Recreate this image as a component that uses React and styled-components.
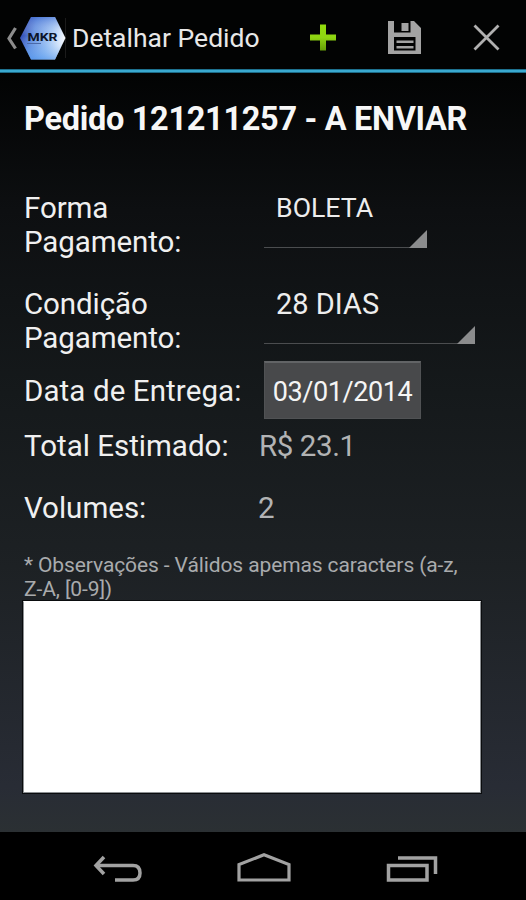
import React, { useState } from "react";
import styled, { createGlobalStyle } from "styled-components";

const GlobalStyle = createGlobalStyle`
  * {
    box-sizing: border-box;
  }

  body {
    margin: 0;
    background: #000000;
    font-family: Roboto, "Noto Sans", sans-serif;
  }
`;

const Screen = styled.div`
  display: flex;
  flex-direction: column;
  width: 526px;
  height: 900px;
  overflow: hidden;
`;

const ActionBar = styled.header`
  display: flex;
  align-items: center;
  flex: none;
  height: 69px;
  padding: 6px 22px 0 6px;
  background: #020303;
`;

const HomeButton = styled.button`
  display: flex;
  align-items: center;
  flex: none;
  width: 66px;
  height: 48px;
  padding: 0;
  border: 0;
  background: none;
`;

const Title = styled.h1`
  flex: 1;
  margin: 0;
  font-size: 26.5px;
  font-weight: 400;
  line-height: 34px;
  white-space: nowrap;
  color: #e8e8e8;
`;

const Actions = styled.div`
  display: flex;
  gap: 48px;
`;

const ActionButton = styled.button`
  display: flex;
  align-items: center;
  justify-content: center;
  width: 34px;
  height: 40px;
  padding: 0;
  border: 0;
  background: none;
`;

const AccentLine = styled.div`
  flex: none;
  height: 4px;
  background: linear-gradient(#1d708e 0 1px, #3aa9d0 1px 3px, #1d6b87 3px);
`;

const Content = styled.main`
  display: flex;
  flex-direction: column;
  flex: none;
  height: 759px;
  padding: 26px 44px 0 23px;
  background: linear-gradient(
    #020303 0%,
    #0d0f11 18%,
    #15191b 42%,
    #1d2124 65%,
    #282c35 94%,
    #2b3033 100%
  );
`;

const Heading = styled.h2`
  flex: none;
  height: 92px;
  margin: 0;
  padding-left: 1px;
  font-size: 32.5px;
  font-weight: 700;
  line-height: 40px;
  letter-spacing: -0.31px;
  white-space: nowrap;
  color: #f7f7f7;
`;

const Row = styled.div`
  display: flex;
  flex: none;
  height: ${(props) => props.$height}px;
`;

const Label = styled.label`
  flex: none;
  width: ${(props) => props.$width || 241}px;
  padding-top: ${(props) => props.$top || 0}px;
  padding-left: 1px;
  font-size: 29.5px;
  line-height: 34.3px;
  letter-spacing: ${(props) => props.$spacing || "0"};
  white-space: pre-line;
  color: #f0f0f0;
`;

const Spinner = styled.div`
  display: flex;
  flex-direction: column;
  justify-content: space-between;
  width: ${(props) => props.$width}px;
  height: 57px;
  padding-left: 12px;
  font-size: ${(props) => props.$size}px;
  line-height: 35px;
  color: #ededed;
  background: linear-gradient(#4b4d4f, #4b4d4f) bottom / 100% 1.5px no-repeat;
`;

const Corner = styled.span`
  align-self: flex-end;
  width: 18px;
  height: 18px;
  background: #8b8c8d;
  clip-path: polygon(100% 0, 100% 100%, 0 100%);
`;

const DateButton = styled.button`
  width: 157px;
  height: 58px;
  padding: 2px 0 0;
  border: 1px solid #505254;
  border-top: 2px solid #626466;
  background: #48494b;
  font-family: inherit;
  font-size: 27px;
  letter-spacing: -0.4px;
  color: #f5f5f5;
`;

const Value = styled.span`
  font-size: 29.5px;
  line-height: 34.3px;
  letter-spacing: -0.4px;
  color: #b2b3b4;
`;

const Note = styled.p`
  flex: none;
  height: 49px;
  margin: 0;
  padding: 1px 0 0 1px;
  font-size: 21px;
  line-height: 24px;
  letter-spacing: -0.11px;
  white-space: pre-line;
  color: #a9abad;
`;

const NotesInput = styled.textarea`
  display: block;
  flex: none;
  width: 458px;
  height: 192px;
  padding: 8px;
  border: 1px solid #8d9093;
  border-top-color: #ffffff;
  outline: 1px solid #0a0c0e;
  background: #ffffff;
  font: 21px Roboto, sans-serif;
  resize: none;
`;

const NavBar = styled.nav`
  flex: none;
  height: 68px;
  background: #000000;
  display: flex;
  align-items: center;
  justify-content: space-between;
  padding: 6px 88px 0 91px;
`;

const Logo = () => (
  <svg width="60" height="48" viewBox="6 12 60 48" fill="none">
    <defs>
      <linearGradient id="hex" x1="20" y1="26" x2="65" y2="40" gradientUnits="userSpaceOnUse">
        <stop offset="0" stopColor="#2338a8" />
        <stop offset="0.3" stopColor="#5f8de0" />
        <stop offset="0.65" stopColor="#a0c4f4" />
        <stop offset="1" stopColor="#ffffff" />
      </linearGradient>
      <linearGradient id="shade" x1="36" y1="14" x2="36" y2="58" gradientUnits="userSpaceOnUse">
        <stop offset="0" stopColor="#3b68d0" stopOpacity="0.6" />
        <stop offset="0.45" stopColor="#ffffff" stopOpacity="0" />
        <stop offset="0.7" stopColor="#6aa6f0" stopOpacity="0.2" />
        <stop offset="1" stopColor="#4c94ee" stopOpacity="0.7" />
      </linearGradient>
    </defs>
    <path d="M65.500 16 V56" stroke="#1b1b1b" />
    <path d="M15.500 26 L9 36.500 L15.500 46.500" stroke="#8c8c8c" strokeWidth="3.200" />
    <path d="M31 15 H55 L65.500 36 L55 57.500 H31 L20 36 Z" fill="url(#hex)" />
    <path d="M31 15 H55 L65.500 36 L55 57.500 H31 L20 36 Z" fill="url(#shade)" />
    <path d="M27 41.500 H41" stroke="#4b69a8" strokeWidth="1" />
    <text
      x="27.500"
      y="39"
      textLength="30"
      lengthAdjust="spacingAndGlyphs"
      fontFamily="Roboto, sans-serif"
      fontSize="11.500"
      fontWeight="700"
      fill="#0d1428"
    >
      MKR
    </text>
  </svg>
);

const PlusIcon = () => (
  <svg width="28" height="28" viewBox="0 0 28 28">
    <defs>
      <linearGradient id="plus" x1="0" y1="0" x2="0" y2="1">
        <stop offset="0" stopColor="#93dc0c" />
        <stop offset="0.5" stopColor="#8fd512" />
        <stop offset="1" stopColor="#659d08" />
      </linearGradient>
    </defs>
    <path d="M11 0.500 H17 V10.500 H27 V16.500 H17 V26.500 H11 V16.500 H1 V10.500 H11 Z" fill="url(#plus)" />
  </svg>
);

const SaveIcon = () => (
  <svg width="34" height="34" viewBox="0 0 34 34">
    <path
      fillRule="evenodd"
      fill="#a3a3a3"
      d="M0 0 H6 V11.500 H22.500 V0 H26 L33 7 V33 H0 Z M6 16 V29.500 H27.500 V16 Z"
    />
    <rect x="13.500" y="2" width="7" height="8" fill="#a3a3a3" />
    <rect x="8.500" y="19.500" width="17" height="2.500" fill="#a3a3a3" />
    <rect x="8.500" y="25" width="17" height="2.500" fill="#a3a3a3" />
  </svg>
);

const CloseIcon = () => (
  <svg width="28" height="28" viewBox="0 0 28 28" fill="none">
    <path d="M1.500 1.500 L25.500 25.500 M25.500 1.500 L1.500 25.500" stroke="#b0b0b0" strokeWidth="2.800" />
  </svg>
);

const BackIcon = () => (
  <svg width="52" height="28" viewBox="0 0 52 28" fill="none" stroke="#a2a2a2" strokeWidth="3.500">
    <path d="M13 2 L5 10.500 L13 19" />
    <path d="M5 10.500 H42 Q49 10.500 49 18 Q49 25 42 25 H24" />
  </svg>
);

const HomeIcon = () => (
  <svg width="56" height="32" viewBox="0 0 56 32" fill="none">
    <path d="M2 27 V11.500 L27 1.800 L52 11.500 V27 Z" stroke="#a2a2a2" strokeWidth="3.200" />
  </svg>
);

const RecentsIcon = () => (
  <svg width="52" height="28" viewBox="0 0 52 28" fill="none" stroke="#a2a2a2" strokeWidth="3.500">
    <path d="M2.500 10.500 H41 V25 H2.500 Z" />
    <path d="M12 3 H49.500 V19" />
  </svg>
);

const App = () => {
  const [notes, setNotes] = useState("");

  return (
    <>
      <GlobalStyle />
      <Screen>
        <ActionBar>
          <HomeButton>
            <Logo />
          </HomeButton>
          <Title>Detalhar Pedido</Title>
          <Actions>
            <ActionButton>
              <PlusIcon />
            </ActionButton>
            <ActionButton>
              <SaveIcon />
            </ActionButton>
            <ActionButton>
              <CloseIcon />
            </ActionButton>
          </Actions>
        </ActionBar>
        <AccentLine />
        <Content>
          <Heading>Pedido 121211257 - A ENVIAR</Heading>
          <Row $height={96}>
            <Label $spacing="-0.1px">{"Forma\nPagamento:"}</Label>
            <Spinner $width={163} $size={26.7}>
              BOLETA
              <Corner />
            </Spinner>
          </Row>
          <Row $height={74}>
            <Label $spacing="-0.1px">{"Condição\nPagamento:"}</Label>
            <Spinner $width={211} $size={29}>
              28 DIAS
              <Corner />
            </Spinner>
          </Row>
          <Row $height={68}>
            <Label $top={12.5} $spacing="0.1px">
              Data de Entrega:
            </Label>
            <DateButton>03/01/2014</DateButton>
          </Row>
          <Row $height={62}>
            <Label $width={236}>Total Estimado:</Label>
            <Value>R$ 23.1</Value>
          </Row>
          <Row $height={61}>
            <Label $width={235}>Volumes:</Label>
            <Value>2</Value>
          </Row>
          <Note>{"* Observações - Válidos apemas caracters (a-z,\nZ-A, [0-9])"}</Note>
          <NotesInput value={notes} onChange={(e) => setNotes(e.target.value)} />
        </Content>
        <NavBar>
          <BackIcon />
          <HomeIcon />
          <RecentsIcon />
        </NavBar>
      </Screen>
    </>
  );
};

export default App;
